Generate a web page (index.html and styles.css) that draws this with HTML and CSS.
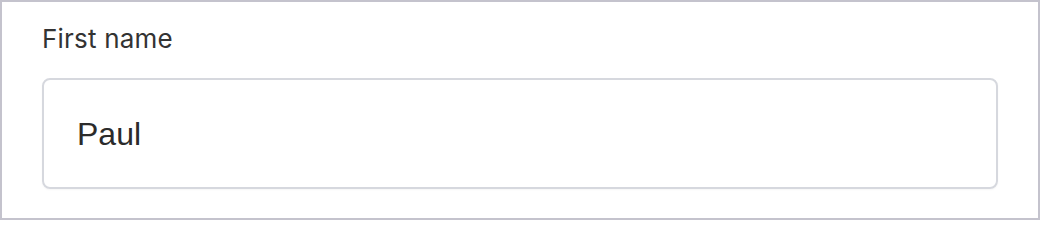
FILE: index.html
```html
<!DOCTYPE html>
<html>
<head>
<meta charset="utf-8">
<link rel="stylesheet" href="styles.css">
</head>
<body>
<div class="frame">
  <label class="field-label" for="first">First name</label>
  <div class="field-input" id="first">Paul</div>
</div>
</body>
</html>
```
FILE: styles.css
```css
html, body {
  margin: 0;
  padding: 0;
  background: #ffffff;
}
.frame {
  box-sizing: border-box;
  width: 1040px;
  height: 220px;
  border: 2px solid #c4c3cd;
  padding: 21px 40px 0 40px;
  display: flex;
  flex-direction: column;
  gap: 23px;
}
.field-label {
  font-family: "Inter", "Lato", sans-serif;
  font-size: 26px;
  line-height: 32px;
  color: #333333;
  letter-spacing: 0.2px;
}
.field-input {
  box-sizing: border-box;
  height: 111px;
  border: 2px solid #d6d8de;
  border-radius: 8px;
  box-shadow: 0 1px 2px rgba(0, 0, 0, 0.04);
  display: flex;
  align-items: center;
  padding-left: 33px;
  padding-top: 2px;
  font-family: "Liberation Sans", Arial, sans-serif;
  font-size: 32px;
  color: #2b2b2b;
}
```
